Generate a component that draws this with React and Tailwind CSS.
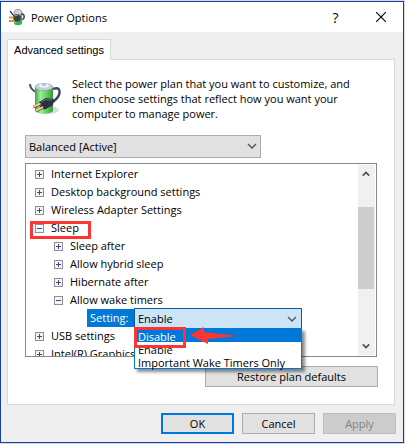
import { useState } from "react";

const PLANS = ["Balanced [Active]", "Power saver", "High performance"];
const WAKE_OPTIONS = ["Disable", "Enable", "Important Wake Timers Only"];

const TREE = [
  { label: "Internet Explorer" },
  { label: "Desktop background settings" },
  { label: "Wireless Adapter Settings" },
  {
    label: "Sleep",
    open: true,
    marked: true,
    children: [
      { label: "Sleep after" },
      { label: "Allow hybrid sleep" },
      { label: "Hibernate after" },
      { label: "Allow wake timers", open: true, setting: true },
    ],
  },
  { label: "USB settings" },
  { label: "Intel(R) Graphics Settings" },
];

function BatteryIcon({ className }) {
  return (
    <svg viewBox="0 0 32 34" className={className} aria-hidden="true">
      <defs>
        <linearGradient id="cell" x1="0" x2="1" y1="0" y2="0">
          <stop offset="0" stopColor="#3aa845" />
          <stop offset="0.3" stopColor="#9bee94" />
          <stop offset="0.65" stopColor="#5fd05f" />
          <stop offset="1" stopColor="#2f9a3a" />
        </linearGradient>
      </defs>
      <ellipse cx="20" cy="28" rx="10" ry="4" fill="#dcdcdc" />
      <path d="M1 2c0 4 2 6 6 8" fill="none" stroke="#4a5468" strokeWidth="2" />
      <path d="M6 5v23c0 5 18 5 18 0V5z" fill="url(#cell)" />
      <ellipse cx="15" cy="5" rx="9" ry="3.500" fill="#c9d0d3" stroke="#8c979c" strokeWidth="0.600" />
      <ellipse cx="15" cy="3.500" rx="5" ry="2" fill="#eef5fb" />
      <ellipse cx="15" cy="2.600" rx="2.500" ry="1.300" fill="#9fc4e4" />
      <path d="M24 7c5-2 7 0 6.500 4S27 18 22 21" fill="none" stroke="#3d4763" strokeWidth="2.400" />
      <path d="M10 20l7-4 8 1-1 6-8 4.500-5-1.500z" fill="#2c3040" />
      <path d="M12 20l5-2.500 6 .5" fill="none" stroke="#6b7183" strokeWidth="1" />
      <path d="M4.500 25l7-3M7 29l7-3.500" stroke="#8a6a35" strokeWidth="3" />
      <path d="M4.500 24.500l7-3M7 28.500l7-3.500" stroke="#f0d9a4" strokeWidth="1.500" />
    </svg>
  );
}

function TitleIcon({ className }) {
  return (
    <svg viewBox="0 0 16 17" className={className} aria-hidden="true">
      <path d="M5 4v10c0 3 8 3 8 0V4z" fill="#35b44a" />
      <path d="M6.500 5v9" stroke="#92e596" strokeWidth="1.500" />
      <path d="M5 4c0-5 8-5 8 0v2H5z" fill="#cdd3dc" stroke="#6f7888" strokeWidth="0.700" />
      <path d="M12 5c4-1 4 5 1 5.500" fill="none" stroke="#3a4150" strokeWidth="1.500" />
      <path d="M1 2l3 4" stroke="#3a4150" strokeWidth="1.300" />
      <path d="M4 6l5-1 3 3-1 4-5 1-2-3z" fill="#3b3f47" />
      <path d="M5 7l4-1" stroke="#9a9fa8" strokeWidth="1" />
      <path d="M0 8.500h5M0 12h6" stroke="#c89a3a" strokeWidth="1.800" />
    </svg>
  );
}

function Chevron({ className, bold, up }) {
  return (
    <svg viewBox="0 0 10 6" className={className} aria-hidden="true">
      <path
        d={up ? "M1 5l4-4 4 4" : "M1 1l4 4 4-4"}
        fill="none"
        stroke="#505050"
        strokeWidth={bold ? 2.2 : 1.3}
      />
    </svg>
  );
}

function Toggle({ open, label, onClick }) {
  return (
    <button
      type="button"
      aria-label={label}
      aria-expanded={open}
      onClick={onClick}
      className="mt-[3px] flex size-[9px] shrink-0 items-center justify-center border border-[#8f8f8f] bg-[#f6f6f6]"
    >
      <svg viewBox="0 0 5 5" className="size-[5px]" shapeRendering="crispEdges" aria-hidden="true">
        <path d={open ? "M0 2h5v1H0z" : "M0 2h5v1H0zM2 0h1v5H2z"} fill="#34499c" />
      </svg>
    </button>
  );
}

function Node({ node, children }) {
  const [open, setOpen] = useState(Boolean(node.open));

  return (
    <li role="treeitem" aria-expanded={open}>
      <div className="relative flex h-[18px] items-center gap-[7px]">
        <Toggle open={open} label={`Toggle ${node.label}`} onClick={() => setOpen(!open)} />
        <span className="whitespace-nowrap">{node.label}</span>
        {node.marked && (
          <span className="absolute -left-[5px] top-[3px] h-[18px] w-[61px] border-3 border-[#fb3434]" />
        )}
      </div>
      {open && children}
    </li>
  );
}

function WakeSetting({ value, onToggle }) {
  return (
    <div className="ml-[33px] flex h-[18px] items-start">
      <span id="wake-label" className="mt-px h-[18px] w-[47px] bg-[#0078d7] pl-[3px] leading-[18px] text-white">
        Setting:
      </span>
      <button
        type="button"
        aria-labelledby="wake-label"
        aria-haspopup="listbox"
        onClick={onToggle}
        className="z-10 flex h-[21px] w-[168px] shrink-0 items-center justify-between border border-[#0a5a9c] bg-[#cce4f7] pl-[3px] pr-1"
      >
        {value}
        <Chevron className="h-[6px] w-[10px]" />
      </button>
    </div>
  );
}

function DialogButton({ className, children, ...props }) {
  return (
    <button type="button" className={`h-[21px] border ${className}`} {...props}>
      <span className="block leading-[18px]">{children}</span>
    </button>
  );
}

export default function App() {
  const [plan, setPlan] = useState(PLANS[0]);
  const [wake, setWake] = useState("Enable");
  const [listOpen, setListOpen] = useState(true);

  const pick = (option) => {
    setWake(option);
    setListOpen(false);
  };

  return (
    <div className="bg-[#d9d9d9] pr-px pt-px pb-px font-['Open_Sans','Noto_Sans',sans-serif] text-[11px] leading-[15px] text-black">
      <main className="border border-[#1441a8] bg-[#efefef]">
        <header className="flex h-[30px] items-center bg-white pl-2">
          <TitleIcon className="h-[17px] w-4" />
          <h1 className="ml-1.5 flex-1">Power Options</h1>
          <button type="button" aria-label="Help" className="w-[45px] text-[14px]">
            ?
          </button>
          <button type="button" aria-label="Close" className="flex w-[45px] justify-center">
            <svg viewBox="0 0 10 10" className="size-[10px]" aria-hidden="true">
              <path d="M0 0l10 10M10 0L0 10" stroke="#000" strokeWidth="1.1" />
            </svg>
          </button>
        </header>

        <div className="pl-1.5 pr-2 pt-[7px]">
          <div role="tablist" className="flex">
            <button
              type="button"
              role="tab"
              aria-selected="true"
              className="z-10 -mb-px h-[21px] w-[104px] border border-b-0 border-[#d9d9d9] bg-white font-['Liberation_Sans',sans-serif]"
            >
              Advanced settings
            </button>
          </div>

          <section className="border border-[#d9d9d9] bg-white px-[17px] pb-[17px] pt-4">
            <div className="flex">
              <BatteryIcon className="ml-1 mt-1.5 h-[34px] w-8 shrink-0" />
              <p className="ml-[11px] max-w-[290px]">
                Select the power plan that you want to customize, and then choose settings that
                reflect how you want your computer to manage power.
              </p>
            </div>

            <div className="relative mt-[14px] w-[236px]">
              <select
                aria-label="Power plan"
                value={plan}
                onChange={(e) => setPlan(e.target.value)}
                className="block h-[23px] w-full appearance-none border border-[#adadad] bg-[#e1e1e1] pl-[3px]"
              >
                {PLANS.map((p) => (
                  <option key={p}>{p}</option>
                ))}
              </select>
              <Chevron className="pointer-events-none absolute right-1 top-2 h-[6px] w-[10px]" />
            </div>

            <div className="relative mt-[5px]">
              <div className="flex h-[194px] overflow-hidden border border-[#828790] bg-white px-px">
                <ul role="tree" className="flex-1 pl-2">
                  {TREE.map((node) => (
                    <Node key={node.label} node={node}>
                      {node.children && (
                        <ul role="group" className="ml-[19px]">
                          {node.children.map((child) => (
                            <Node key={child.label} node={child}>
                              {child.setting && (
                                <WakeSetting value={wake} onToggle={() => setListOpen(!listOpen)} />
                              )}
                            </Node>
                          ))}
                        </ul>
                      )}
                    </Node>
                  ))}
                </ul>
                <div className="my-px flex w-[17px] flex-col bg-[#f0f0f0] pr-px">
                  <button type="button" aria-label="Scroll up" className="flex h-[18px] items-center justify-center">
                    <Chevron up bold className="h-[6px] w-2" />
                  </button>
                  <div className="mt-6 h-[82px] bg-[#cdcdcd]" />
                  <button
                    type="button"
                    aria-label="Scroll down"
                    className="mt-auto flex h-[18px] items-center justify-center"
                  >
                    <Chevron bold className="h-[6px] w-2" />
                  </button>
                </div>
              </div>

              {listOpen && (
                <div className="absolute left-[109px] top-[165px] z-20 w-[168px]">
                  <ul
                    role="listbox"
                    aria-label="Setting"
                    className="border border-[#0078d7] bg-white leading-[15px] shadow-[3px_3px_3px_rgba(0,0,0,0.45)]"
                  >
                    {WAKE_OPTIONS.map((option) => (
                      <li
                        key={option}
                        role="option"
                        aria-selected={option === "Disable"}
                        onClick={() => pick(option)}
                        className="h-[13px] whitespace-nowrap pl-[3px] aria-selected:bg-[#0078d7] aria-selected:text-white"
                      >
                        {option}
                      </li>
                    ))}
                  </ul>
                  <span className="absolute left-0 -top-px h-[21px] w-[52px] border-3 border-[#fb3434]" />
                  <svg viewBox="0 0 48 18" className="absolute left-14 -top-px h-[18px] w-12" aria-hidden="true">
                    <path d="M0 8L14 0v5l34 4-30 3v5z" fill="#fb3434" />
                  </svg>
                </div>
              )}
            </div>

            <div className="mt-[9px] -mr-px flex justify-end">
              <DialogButton className="w-[173px] border-[#adadad] bg-[#e1e1e1]">
                Restore plan defaults
              </DialogButton>
            </div>
          </section>
        </div>

        <footer className="flex justify-end gap-2 pb-2 pr-[7px] pt-2">
          <DialogButton className="w-[73px] border-2 border-[#0078d7] bg-[#e1e1e1]">OK</DialogButton>
          <DialogButton className="w-[73px] border-[#adadad] bg-[#e1e1e1]">Cancel</DialogButton>
          <DialogButton disabled className="w-[73px] border-[#bfbfbf] bg-[#cccccc] text-[#838383]">
            Apply
          </DialogButton>
        </footer>
      </main>
    </div>
  );
}
